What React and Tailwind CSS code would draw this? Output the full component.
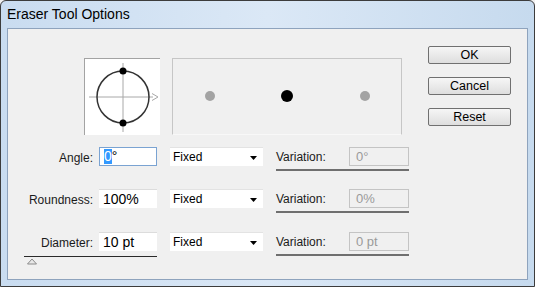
import React from "react";

const font = { fontFamily: '"Liberation Sans", Arial, sans-serif' };

function Dropdown() {
  return (
    <div className="flex h-[19px] w-[93px] items-center bg-white border-t border-[#e3e3e3]">
      <span className="flex-1 pl-[3px] text-[12px] text-black">Fixed</span>
      <svg width="17" height="19" viewBox="0 0 17 19">
        <path d="M4 8 L11 8 L7.5 12 Z" fill="#000" />
      </svg>
    </div>
  );
}

function Variation({ value }) {
  return (
    <div className="flex w-[133px] flex-col border-b-2 border-[#6f6f6f] pb-[3px]">
      <div className="flex items-center">
        <span className="w-[73px] text-[12px] text-[#1a1a1a]">Variation:</span>
        <div className="flex h-[19px] w-[60px] items-center border border-[#c4c4c4] bg-[#f0f0f0] pl-[6px] text-[13px] text-[#9a9a9a]">
          {value}
        </div>
      </div>
    </div>
  );
}

function Row({ label, children, value }) {
  return (
    <div className="flex items-start">
      <span className="w-[85px] pt-[2px] text-right text-[12px] text-[#1a1a1a]">{label}</span>
      <div className="ml-[6px]">{children}</div>
      <div className="ml-[13px]">
        <Dropdown />
      </div>
      <div className="ml-[13px]">
        <Variation value={value} />
      </div>
    </div>
  );
}

function Btn({ children }) {
  return (
    <button className="h-[18px] w-[83px] rounded-[2px] border border-[#707070] bg-gradient-to-b from-[#f6f6f6] to-[#dedede] text-[12.5px] leading-[16px] text-black">
      {children}
    </button>
  );
}

export default function App() {
  return (
    <div className="h-[287px] w-[535px] overflow-hidden bg-[#f0f0f0]" style={font}>
      <div className="flex h-[287px] w-[535px] flex-col rounded-t-[6px] border border-[#3c3c3c] bg-gradient-to-r from-[#c9dcf0] via-[#dbe8f6] to-[#c6daee]">
        {/* title bar */}
        <div className="flex h-[27px] items-center pl-[6px] text-[14px] text-black">
          Eraser Tool Options
        </div>
        {/* content */}
        <div className="mx-[6px] mb-[6px] flex flex-1 border border-[#8ea3bd] bg-[#f0f0f0]">
          <div className="flex flex-col">
            {/* previews */}
            <div className="ml-[76px] mt-[29px] flex gap-[12px]">
              <div className="h-[77px] w-[76px] border-l border-t border-[#a3a3a3] bg-white">
                <svg width="76" height="77" viewBox="0 0 76 77">
                  <line x1="4" y1="38" x2="68" y2="38" stroke="#a8a8a8" strokeWidth="1" />
                  <path d="M67 34.5 L73 38 L67 41.5" fill="none" stroke="#a8a8a8" strokeWidth="1" />
                  <line x1="38" y1="4" x2="38" y2="73" stroke="#a8a8a8" strokeWidth="1" />
                  <circle cx="38" cy="38" r="26" fill="none" stroke="#333" strokeWidth="1.5" />
                  <circle cx="38" cy="12" r="3.5" fill="#000" />
                  <circle cx="38" cy="64" r="3.5" fill="#000" />
                </svg>
              </div>
              <div className="h-[77px] w-[230px] border border-[#c6c6c6] border-b-[#f8f8f8]">
                <svg width="228" height="75" viewBox="0 0 228 75">
                  <circle cx="37" cy="37" r="5" fill="#a3a3a3" />
                  <circle cx="114" cy="37" r="6" fill="#000" />
                  <circle cx="192" cy="37" r="5" fill="#a3a3a3" />
                </svg>
              </div>
            </div>

            {/* rows */}
            <div className="mt-[12px] flex flex-col">
              <Row label="Angle:" value="0°">
                <div className="flex h-[19px] w-[58px] items-center border border-[#7aa3d2] bg-white pl-[4px] text-[14px]">
                  <span className="bg-[#3399ff] leading-[15px] text-white">0</span>
                  <span className="text-black">°</span>
                </div>
              </Row>
              <div className="mt-[18px]">
                <Row label="Roundness:" value="0%">
                  <div className="flex h-[19px] w-[58px] items-center border-t border-[#dcdcdc] bg-white pl-[4px] text-[14px] text-black">
                    100%
                  </div>
                </Row>
              </div>
              <div className="mt-[19px] flex items-start">
                <div className="ml-[16px] flex flex-col">
                  <div className="flex w-[133px] items-start border-b border-[#2a2a2a] pb-[4px]">
                    <span className="w-[69px] pt-[2px] text-right text-[12px] text-[#1a1a1a]">Diameter:</span>
                    <div className="ml-[6px] flex h-[19px] w-[58px] items-center border-t border-[#dcdcdc] bg-white pl-[4px] text-[14px] text-black">
                      10 pt
                    </div>
                  </div>
                  <svg width="12" height="7" viewBox="0 0 12 7" className="ml-[2px] mt-[1px]">
                    <path d="M1.5 6 L6 1 L10.5 6 Z" fill="#e8e8e8" stroke="#8a8a8a" strokeWidth="1" />
                  </svg>
                </div>
                <div className="ml-[13px]">
                  <Dropdown />
                </div>
                <div className="ml-[13px]">
                  <Variation value="0 pt" />
                </div>
              </div>
            </div>
          </div>

          {/* buttons */}
          <div className="ml-auto mr-[16px] mt-[17px] flex flex-col gap-[13px]">
            <Btn>OK</Btn>
            <Btn>Cancel</Btn>
            <Btn>Reset</Btn>
          </div>
        </div>
      </div>
    </div>
  );
}
